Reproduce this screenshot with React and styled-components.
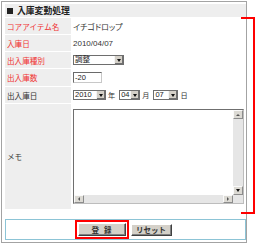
import React from 'react';
import styled, { createGlobalStyle } from 'styled-components';

const GlobalStyle = createGlobalStyle`
  html, body {
    margin: 0;
    padding: 0;
    background: #ffffff;
  }
  body {
    font-family: "Liberation Sans", "Noto Sans CJK JP", sans-serif;
    color: #333333;
  }
`;

const Stage = styled.div`
  position: relative;
  width: 257px;
  height: 244px;
  padding: 1px 0 0 1px;
  box-sizing: border-box;
`;

const Panel = styled.div`
  width: 246px;
  height: 242px;
  box-sizing: border-box;
  border: 1px solid #a3a3a3;
  padding: 2px 0 2px 3px;
  display: flex;
  flex-direction: column;
`;

const Heading = styled.div`
  height: 13px;
  background: #eeeeee;
  display: flex;
  align-items: center;
  gap: 4px;
  padding-left: 2px;
  font-size: 8.8px;
  font-weight: 700;
  color: #222222;
  margin-bottom: 1px;
`;

const Square = styled.span`
  width: 6px;
  height: 6px;
  background: #222222;
`;

const FormGrid = styled.div`
  display: grid;
  grid-template-columns: 66px 1fr;
  grid-template-rows: 16px 16px 16px 17px 16px 105px;
  column-gap: 1px;
  row-gap: 1px;
`;

const Label = styled.div`
  background: #eeeeee;
  display: flex;
  align-items: center;
  padding-left: 2px;
  font-size: 7.6px;
  color: ${p => (p.required ? '#f03232' : '#333333')};
`;

const Value = styled.div`
  display: flex;
  align-items: center;
  gap: 1px;
  padding-left: 1px;
  font-size: 8px;
  font-feature-settings: "palt";
  color: #333333;
`;

const Select = styled.div`
  width: ${p => p.w}px;
  height: 10px;
  box-sizing: border-box;
  border: 1px solid #6e6e6e;
  background: #ffffff;
  display: flex;
  align-items: stretch;
  font-size: 7.5px;
  margin-right: 1px;
`;

const SelectText = styled.span`
  flex: 1;
  display: flex;
  align-items: center;
  padding-left: 1px;
  line-height: 1;
  color: #222222;
`;

const ArrowButton = styled.span`
  width: 8px;
  background: #d4d0c8;
  border-left: 1px solid #f4f4f4;
  box-shadow: inset -1px -1px 0 #707070;
  display: flex;
  align-items: center;
  justify-content: center;
`;

const sides = {
  down: 'border-left: 2px solid transparent; border-right: 2px solid transparent; border-top: 3px solid #111;',
  up: 'border-left: 2px solid transparent; border-right: 2px solid transparent; border-bottom: 2px solid #555;',
  left: 'border-top: 2px solid transparent; border-bottom: 2px solid transparent; border-right: 2px solid #555;',
  right: 'border-top: 2px solid transparent; border-bottom: 2px solid transparent; border-left: 2px solid #555;',
};

const Triangle = styled.span`
  width: 0;
  height: 0;
  ${p => sides[p.points || 'down']}
`;

const TextInput = styled.div`
  width: 29px;
  height: 11px;
  box-sizing: border-box;
  border-top: 1px solid #6a6a6a;
  border-left: 1px solid #6a6a6a;
  border-right: 1px solid #c8c8c8;
  border-bottom: 1px solid #c8c8c8;
  display: flex;
  align-items: center;
  padding-left: 1px;
  font-size: 7.5px;
  color: #222222;
`;

const Unit = styled.span`
  font-size: 7.2px;
  margin-right: 3px;
`;

const Memo = styled.div`
  width: 171px;
  height: 95px;
  box-sizing: border-box;
  border-top: 1px solid #6f6f6f;
  border-left: 1px solid #6f6f6f;
  border-right: 1px solid #bdbdbd;
  border-bottom: 1px solid #bdbdbd;
  display: grid;
  grid-template-columns: 1fr 10px;
  grid-template-rows: 1fr 8px;
  background: #ffffff;
`;

const ScrollTrack = styled.div`
  background: #e6e6e6;
  display: flex;
  flex-direction: ${p => (p.vertical ? 'column' : 'row')};
  justify-content: space-between;
`;

const ScrollButton = styled.span`
  width: 10px;
  height: ${p => (p.vertical ? 9 : 8)}px;
  box-sizing: border-box;
  background: #dcdad4;
  border-top: 1px solid #fafafa;
  border-left: 1px solid #fafafa;
  border-right: 1px solid #8c8c8c;
  border-bottom: 1px solid #8c8c8c;
  display: flex;
  align-items: center;
  justify-content: center;
`;

const Corner = styled.div`
  background: #e6e6e6;
`;

const ButtonBar = styled.div`
  margin-top: 10px;
  width: 241px;
  height: 21px;
  box-sizing: border-box;
  border: 1px solid #8cc4d6;
  display: flex;
  align-items: center;
  justify-content: center;
  gap: 2px;
  padding-right: 5px;
`;

const Highlight = styled.span`
  border: 2px solid #ff0000;
  padding: 1px;
  display: flex;
`;

const Button = styled.span`
  width: ${p => p.w}px;
  height: ${p => p.h || 12}px;
  box-sizing: border-box;
  background: #d4d0c8;
  border-top: 1px solid #ffffff;
  border-left: 1px solid #ffffff;
  border-right: 1px solid #404040;
  border-bottom: 1px solid #404040;
  box-shadow: inset -1px -1px 0 #808080;
  display: flex;
  align-items: center;
  justify-content: center;
  font-size: 7.5px;
  font-weight: 700;
  color: #333333;
  letter-spacing: ${p => p.spread || 0}px;
  text-indent: ${p => p.spread || 0}px;
`;

const Bracket = styled.div`
  position: absolute;
  left: 241px;
  top: 17px;
  width: 12px;
  height: 193px;
  border: 2px solid #ff0000;
  border-left: none;
`;

const DropDown = ({ value, w }) => (
  <Select w={w}>
    <SelectText>{value}</SelectText>
    <ArrowButton><Triangle /></ArrowButton>
  </Select>
);

export default function App() {
  return (
    <>
      <GlobalStyle />
      <Stage>
        <Panel>
          <Heading>
            <Square />
            入庫変動処理
          </Heading>
          <FormGrid>
            <Label required>コアアイテム名</Label>
            <Value>イチゴドロップ</Value>

            <Label required>入庫日</Label>
            <Value>2010/04/07</Value>

            <Label required>出入庫種別</Label>
            <Value>
              <DropDown value="調整" w={51} />
            </Value>

            <Label required>出入庫数</Label>
            <Value>
              <TextInput>-20</TextInput>
            </Value>

            <Label>出入庫日</Label>
            <Value>
              <DropDown value="2010" w={33} />
              <Unit>年</Unit>
              <DropDown value="04" w={21} />
              <Unit>月</Unit>
              <DropDown value="07" w={25} />
              <Unit>日</Unit>
            </Value>

            <Label>メモ</Label>
            <Value>
              <Memo>
                <div />
                <ScrollTrack vertical>
                  <ScrollButton vertical><Triangle points="up" /></ScrollButton>
                  <ScrollButton vertical><Triangle points="down" /></ScrollButton>
                </ScrollTrack>
                <ScrollTrack>
                  <ScrollButton><Triangle points="left" /></ScrollButton>
                  <ScrollButton><Triangle points="right" /></ScrollButton>
                </ScrollTrack>
                <Corner />
              </Memo>
            </Value>
          </FormGrid>
          <ButtonBar>
            <Highlight>
              <Button w={48} h={13} spread={5}>登録</Button>
            </Highlight>
            <Button w={41}>リセット</Button>
          </ButtonBar>
        </Panel>
        <Bracket />
      </Stage>
    </>
  );
}
